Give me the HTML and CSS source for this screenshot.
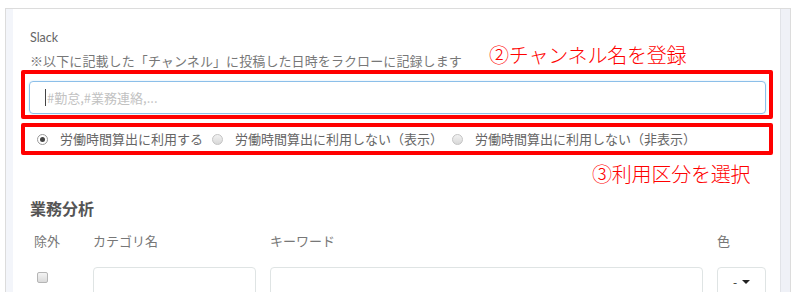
FILE: index.html
```html
<!DOCTYPE html>
<html lang="ja">
<head>
<meta charset="utf-8">
<title>Slack 設定</title>
<link rel="stylesheet" href="styles.css">
</head>
<body>
<div class="frame">
  <div class="stripe-left"></div>
  <main class="main">
    <div class="label">Slack</div>
    <div class="note">※以下に記載した「チャンネル」に投稿した日時をラクローに記録します</div>
    <div class="redbox redbox-input">
      <div class="input focused"><span class="caret"></span><span class="placeholder">#勤怠,#業務連絡,...</span></div>
    </div>
    <div class="redbox redbox-radio">
      <label class="radio-item"><span class="radio checked"></span><span class="radio-label">労働時間算出に利用する</span></label>
      <label class="radio-item"><span class="radio"></span><span class="radio-label">労働時間算出に利用しない（表示）</span></label>
      <label class="radio-item"><span class="radio"></span><span class="radio-label">労働時間算出に利用しない（非表示）</span></label>
    </div>

    <h2 class="section-title">業務分析</h2>
    <div class="table">
      <div class="th">除外</div>
      <div class="th">カテゴリ名</div>
      <div class="th">キーワード</div>
      <div class="th">色</div>
      <div class="td"><span class="checkbox"></span></div>
      <div class="td"><div class="field"></div></div>
      <div class="td"><div class="field"></div></div>
      <div class="td"><div class="field select"><span class="dash">-</span><span class="tri"></span></div></div>
    </div>

    <div class="annot annot-1">②チャンネル名を登録</div>
    <div class="annot annot-2">③利用区分を選択</div>
  </main>
  <div class="stripe-right"></div>
</div>
</body>
</html>
```
FILE: styles.css
```css
* { box-sizing: border-box; }
html, body { margin: 0; padding: 0; background: #fff; }
body {
  font-family: "Noto Sans CJK JP", "Noto Sans", sans-serif;
  color: #666;
  overflow: hidden;
  height: 292px;
}
.frame {
  margin: 8px 3px 0 5px;
  border: 1px solid #dcdcdc;
  border-bottom: none;
  height: 284px;
  display: flex;
}
.stripe-left {
  width: 7px;
  background: #f3f5fa;
  flex: none;
}
.stripe-right {
  width: 10px;
  background: #eff1f7;
  border-left: 1px solid #e1e3e8;
  flex: none;
}
.main {
  flex: 1;
  position: relative;
  padding: 20px 0 0 0;
  background: #fff;
}
.label {
  font-family: "Lato", "Noto Sans CJK JP", sans-serif;
  font-size: 12.5px;
  line-height: 18px;
  color: #666;
  padding-left: 17px;
}
.note {
  margin-top: 5px;
  font-size: 13px;
  line-height: 18px;
  color: #777;
  padding-left: 17px;
  letter-spacing: 0.1px;
}
.redbox {
  margin-left: 8px;
  width: 752px;
  border: 4px solid #ff0000;
  border-radius: 2px;
}
.redbox-input {
  height: 49px;
  padding: 7px 3px 0 4px;
}
.input {
  height: 33px;
  border: 1px solid #8cbfe9;
  border-radius: 4px;
  box-shadow: 0 0 2px rgba(102, 175, 233, 0.35);
  display: flex;
  align-items: center;
  padding-left: 15px;
}
.caret {
  width: 1px;
  height: 17px;
  background: #444;
  margin-right: 1px;
}
.placeholder {
  font-size: 13px;
  color: #c2c2c2;
  line-height: 18px;
}
.redbox-radio {
  margin-top: 4px;
  height: 32px;
  display: flex;
  align-items: center;
  padding-left: 12px;
  gap: 9px;
}
.radio-item {
  display: flex;
  align-items: center;
  gap: 12px;
}
.radio {
  width: 11px;
  height: 11px;
  border-radius: 50%;
  border: 1px solid #c4c4c4;
  background: linear-gradient(#f2f2f2, #d8d8d8);
  position: relative;
  flex: none;
}
.radio.checked {
  background: #fff;
  border-color: #9a9a9a;
}
.radio.checked::after {
  content: "";
  position: absolute;
  left: 2px;
  top: 2px;
  width: 5px;
  height: 5px;
  border-radius: 50%;
  background: #444;
}
.radio-label {
  font-size: 13px;
  line-height: 18px;
  color: #666;
}
.section-title {
  margin: 42px 0 0 17px;
  font-size: 16px;
  line-height: 22px;
  font-weight: 700;
  color: #555;
}
.table {
  margin: 13px 0 0 21px;
  display: grid;
  grid-template-columns: 45px 163px 433px 49px;
  column-gap: 14px;
  row-gap: 17px;
}
.th {
  font-size: 13px;
  line-height: 18px;
  color: #777;
}
.td { height: 25px; }
.checkbox {
  display: block;
  margin: 5px 0 0 3px;
  width: 11px;
  height: 11px;
  border: 1px solid #b5b5b5;
  border-radius: 2px;
  background: linear-gradient(#f4f4f4, #dadada);
}
.field {
  height: 34px;
  border: 1px solid #dfe4e4;
  border-radius: 4px;
  background: #fff;
}
.select {
  display: flex;
  align-items: flex-start;
  justify-content: center;
  gap: 5px;
  padding-top: 9px;
}
.dash {
  font-size: 12px;
  color: #333;
  line-height: 10px;
}
.tri {
  margin-top: 3px;
  width: 0;
  height: 0;
  border-left: 4px solid transparent;
  border-right: 4px solid transparent;
  border-top: 4px solid #222;
}
.annot {
  position: absolute;
  font-size: 20px;
  line-height: 24px;
  font-weight: 300;
  color: #ff0000;
  white-space: nowrap;
  letter-spacing: -0.2px;
}
.annot-1 { left: 476px; top: 34px; }
.annot-2 { left: 579px; top: 153px; }
```
